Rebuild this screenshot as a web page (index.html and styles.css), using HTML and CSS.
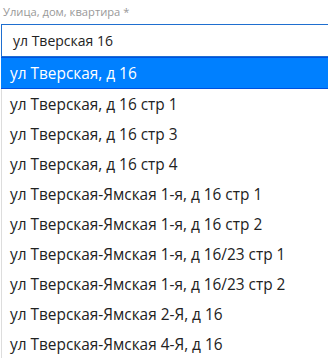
FILE: index.html
```html
<!DOCTYPE html>
<html lang="ru">
<head>
  <meta charset="UTF-8">
  <title>Адрес</title>
  <link rel="stylesheet" href="styles.css">
</head>
<body>
  <div class="field">
    <label class="field-label">Улица, дом, квартира *</label>
    <div class="field-input">ул Тверская 16</div>
    <ul class="suggestions">
      <li class="active">ул Тверская, д 16</li>
      <li>ул Тверская, д 16 стр 1</li>
      <li>ул Тверская, д 16 стр 3</li>
      <li>ул Тверская, д 16 стр 4</li>
      <li>ул Тверская-Ямская 1-я, д 16 стр 1</li>
      <li>ул Тверская-Ямская 1-я, д 16 стр 2</li>
      <li>ул Тверская-Ямская 1-я, д 16/23 стр 1</li>
      <li>ул Тверская-Ямская 1-я, д 16/23 стр 2</li>
      <li>ул Тверская-Ямская 2-Я, д 16</li>
      <li>ул Тверская-Ямская 4-Я, д 16</li>
    </ul>
  </div>
</body>
</html>
```

FILE: styles.css
```css
body {
  margin: 0;
  background-color: white;
  font-family: "Open Sans", Arial, sans-serif;
  overflow: hidden;
}

.field {
  width: 340px;
  padding-left: 1px;
}

.field-label {
  display: block;
  color: #999;
  font-size: 11.2px;
  padding: 4px 0 0 2px;
  height: 20px;
}

.field-input {
  border: 1px solid #1f6fd0;
  border-right: none;
  height: 31px;
  line-height: 31px;
  padding-left: 11px;
  font-size: 14px;
  color: #222;
}

.suggestions {
  list-style: none;
  margin: 0;
  padding: 0;
  border-left: 1px solid #ddd;
}

.suggestions li {
  height: 30px;
  line-height: 31px;
  padding-left: 8px;
  font-size: 15.4px;
  color: #222;
  white-space: nowrap;
}

.suggestions li.active {
  background-color: #0080ff;
  color: white;
  border-top: 1px solid #0050e0;
  border-bottom: 1px solid #0050e0;
  height: 30px;
  margin-left: -1px;
  padding-left: 9px;
}
```
